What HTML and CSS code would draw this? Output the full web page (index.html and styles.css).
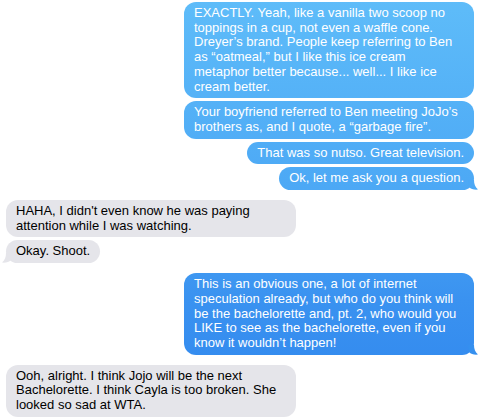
FILE: index.html
```html
<!DOCTYPE html>
<html>
<head>
<meta charset="utf-8">
<link rel="stylesheet" href="styles.css">
</head>
<body>
<div class="thread">
  <div class="group sent">
    <div class="bubble">EXACTLY. Yeah, like a vanilla two scoop no toppings in a cup, not even a waffle cone. Dreyer’s brand. People keep referring to Ben as “oatmeal,” but I like this ice cream metaphor better because... well... I like ice cream better.</div>
    <div class="bubble">Your boyfriend referred to Ben meeting JoJo’s brothers as, and I quote, a “garbage fire”.</div>
    <div class="bubble">That was so nutso. Great television.</div>
    <div class="bubble last">Ok, let me ask you a question.<svg class="tail tail-light" width="10" height="10" viewBox="0 0 10 10"><path d="M0 0 H6 C6 4 7 7 10 9.6 C6 10 3 9 1 7 Z"/></svg></div>
  </div>
  <div class="group received">
    <div class="bubble">HAHA, I didn't even know he was paying attention while I was watching.</div>
    <div class="bubble last">Okay. Shoot.<svg class="tail" width="10" height="10" viewBox="0 0 10 10"><path d="M10 0 H4 C4 4 3 7 0 9.6 C4 10 7 9 9 7 Z"/></svg></div>
  </div>
  <div class="group sent">
    <div class="bubble last">This is an obvious one, a lot of internet speculation already, but who do you think will be the bachelorette and, pt. 2, who would you LIKE to see as the bachelorette, even if you know it wouldn’t happen!<svg class="tail tail-dark" width="10" height="10" viewBox="0 0 10 10"><path d="M0 0 H6 C6 4 7 7 10 9.6 C6 10 3 9 1 7 Z"/></svg></div>
  </div>
  <div class="group received">
    <div class="bubble">Ooh, alright. I think Jojo will be the next Bachelorette. I think Cayla is too broken. She looked so sad at WTA.</div>
  </div>
</div>
</body>
</html>
```
FILE: styles.css
```css
html, body {
  margin: 0;
  padding: 0;
  background: #ffffff;
}
body {
  width: 488px;
  height: 417px;
  overflow: hidden;
  font-family: "Liberation Sans", Arial, sans-serif;
  font-size: 13px;
  line-height: 14.7px;
}
.thread {
  display: flex;
  flex-direction: column;
  gap: 10px;
  padding: 2px 14px 0 6px;
}
.group {
  display: flex;
  flex-direction: column;
  gap: 3px;
}
.group.sent {
  align-items: flex-end;
}
.group.received {
  align-items: flex-start;
}
.bubble {
  position: relative;
  max-width: 290px;
  box-sizing: border-box;
  padding: 4px 10px;
  border-radius: 12px;
}
.sent .bubble {
  color: #ffffff;
  background: linear-gradient(180deg, #5ebcf9 0px, #4ca8f5 190px, #3a92f0 300px, #2f86ee 417px) fixed;
}
.received .bubble {
  color: #000000;
  background: #e5e5ea;
}
.tail {
  position: absolute;
  bottom: 0;
}
.sent .tail {
  right: -4px;
}
.tail-light {
  fill: #4ca8f5;
}
.tail-dark {
  fill: #3590ef;
}
.received .tail {
  left: -4px;
  fill: #e5e5ea;
}
```
